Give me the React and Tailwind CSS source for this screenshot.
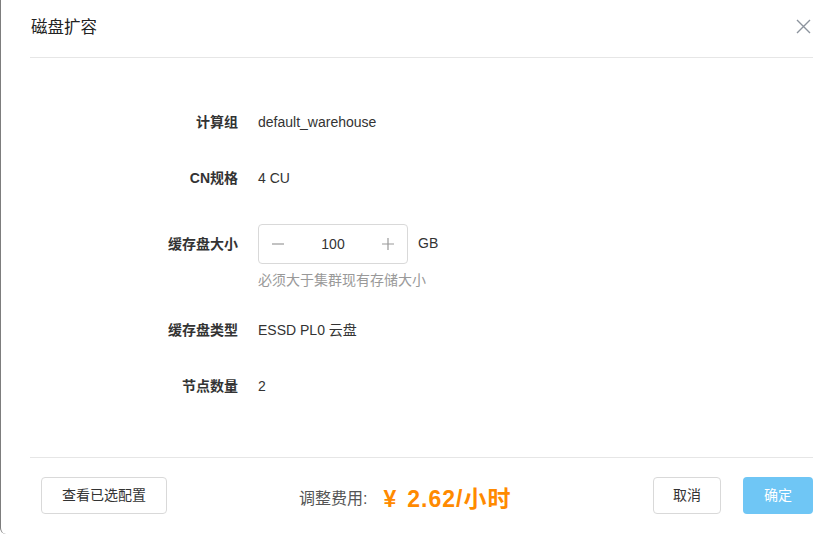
import React, { useState } from 'react';

const font = { fontFamily: '"Liberation Sans", Arial, "Noto Sans CJK SC", sans-serif' };

const Row = ({ label, children, className = '' }) => (
  <div className={`flex items-center ${className}`}>
    <div className="w-[208px] shrink-0 text-right text-[14px] font-bold text-[#333] leading-[20px]">{label}</div>
    <div className="ml-[20px] flex items-center text-[14px] text-[#333] leading-[20px]">{children}</div>
  </div>
);

const App = () => {
  const [size, setSize] = useState(100);

  return (
    <div
      className="w-[837px] h-[534px] bg-white border-l border-[#7d7d7d] rounded-bl-[6px] overflow-hidden"
      style={font}
    >
      <div className="ml-[29px] mr-[24px] flex flex-col h-full">
        {/* Header */}
        <div className="h-[58px] flex items-start justify-between pt-[16px] border-b border-[#e6e6e6]">
          <h2 className="text-[16.5px] text-[#222] leading-[22px] pl-[1px]">磁盘扩容</h2>
          <button className="mt-[3px] mr-[2px] text-[#8c939d]">
            <svg width="15" height="15" viewBox="0 0 15 15" fill="none" stroke="currentColor" strokeWidth="1.4">
              <path d="M1 1L14 14M14 1L1 14" />
            </svg>
          </button>
        </div>

        {/* Form */}
        <div className="flex-1 pt-[54px]">
          <Row label="计算组">default_warehouse</Row>
          <Row label="CN规格" className="mt-[36px]">4 CU</Row>
          <div className="mt-[36px]">
            <Row label="缓存盘大小">
              <div className="w-[150px] h-[40px] border border-[#d9d9d9] rounded-[4px] flex items-center justify-between px-[12px]">
                <button onClick={() => setSize(size - 1)} className="text-[#999]">
                  <svg width="14" height="14" viewBox="0 0 14 14" stroke="currentColor" strokeWidth="1.2">
                    <path d="M1 7H13" />
                  </svg>
                </button>
                <span className="text-[14px] text-[#333]">{size}</span>
                <button onClick={() => setSize(size + 1)} className="text-[#999]">
                  <svg width="14" height="14" viewBox="0 0 14 14" stroke="currentColor" strokeWidth="1.2">
                    <path d="M1 7H13M7 1V13" />
                  </svg>
                </button>
              </div>
              <span className="ml-[10px] -mt-[2px] text-[#333]">GB</span>
            </Row>
            <div className="ml-[228px] mt-[6px] text-[14px] leading-[20px] text-[#999]">必须大于集群现有存储大小</div>
          </div>
          <Row label="缓存盘类型" className="mt-[30px]">ESSD PL0 云盘</Row>
          <Row label="节点数量" className="mt-[36px]">2</Row>
        </div>

        {/* Footer */}
        <div className="border-t border-[#e6e6e6] h-[77px] pt-[19px] pl-[11px] flex items-start">
          <button className="h-[37px] w-[126px] border border-[#d9d9d9] rounded-[4px] text-[14px] text-[#333]">
            查看已选配置
          </button>
          <div className="ml-[132px] mt-[5px] flex items-center">
            <span className="text-[16px] text-[#555]">调整费用:</span>
            <span className="ml-[16px] text-[23px] font-bold text-[#ff8a00]">¥</span>
            <span className="ml-[11px] text-[23px] font-bold tracking-[1px] text-[#ff8a00]">2.62/小时</span>
          </div>
          <div className="flex-1" />
          <button className="h-[37px] w-[68px] border border-[#d9d9d9] rounded-[4px] text-[14px] text-[#333]">
            取消
          </button>
          <button className="ml-[22px] h-[37px] w-[70px] rounded-[4px] bg-[#6fc6f5] text-[14px] text-white">
            确定
          </button>
        </div>
      </div>
    </div>
  );
};

export default App;
